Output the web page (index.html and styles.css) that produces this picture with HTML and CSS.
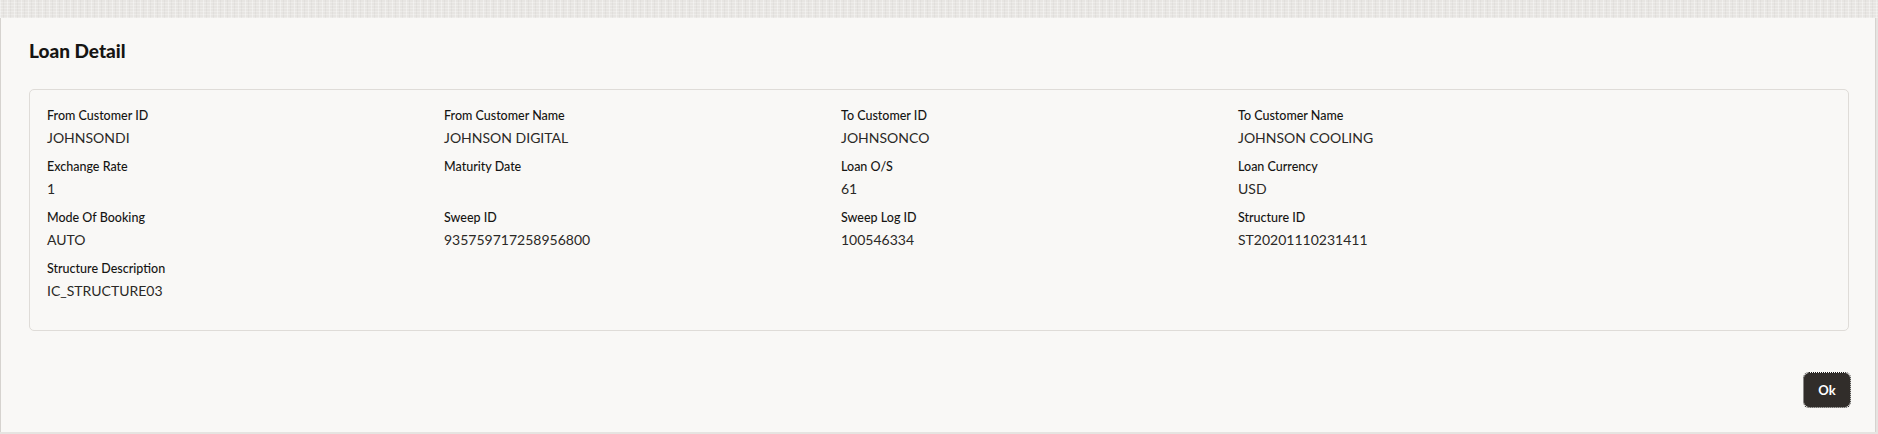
FILE: index.html
```html
<!DOCTYPE html>
<html>
<head>
<meta charset="utf-8">
<link rel="stylesheet" href="styles.css">
</head>
<body>
<div class="backdrop"></div>
<div class="dialog">
  <div class="dialog-header"><h1 class="title">Loan Detail</h1></div>
  <div class="card">
    <div class="grid">
      <div class="field"><div class="label">From Customer ID</div><div class="value">JOHNSONDI</div></div>
      <div class="field"><div class="label">From Customer Name</div><div class="value">JOHNSON DIGITAL</div></div>
      <div class="field"><div class="label">To Customer ID</div><div class="value">JOHNSONCO</div></div>
      <div class="field"><div class="label">To Customer Name</div><div class="value">JOHNSON COOLING</div></div>
      <div class="field"><div class="label">Exchange Rate</div><div class="value">1</div></div>
      <div class="field"><div class="label">Maturity Date</div><div class="value"></div></div>
      <div class="field"><div class="label">Loan O/S</div><div class="value">61</div></div>
      <div class="field"><div class="label">Loan Currency</div><div class="value">USD</div></div>
      <div class="field"><div class="label">Mode Of Booking</div><div class="value">AUTO</div></div>
      <div class="field"><div class="label">Sweep ID</div><div class="value">935759717258956800</div></div>
      <div class="field"><div class="label">Sweep Log ID</div><div class="value">100546334</div></div>
      <div class="field"><div class="label">Structure ID</div><div class="value">ST20201110231411</div></div>
      <div class="field"><div class="label">Structure Description</div><div class="value">IC_STRUCTURE03</div></div>
    </div>
  </div>
  <div class="footer"><button class="btn-ok">Ok</button></div>
</div>
</body>
</html>
```
FILE: styles.css
```css
html, body {
  margin: 0;
  padding: 0;
  background: #e6e4e1;
  font-family: Lato, "Noto Sans", "Liberation Sans", sans-serif;
  color: #161513;
}
.backdrop {
  height: 18px;
  background:
    repeating-linear-gradient(90deg, rgba(255,255,255,0.35) 0 1px, transparent 1px 3px, rgba(0,0,0,0.03) 3px 4px, transparent 4px 7px),
    repeating-linear-gradient(0deg, rgba(255,255,255,0.25) 0 1px, transparent 1px 3px),
    #e7e5e2;
}
.dialog {
  height: 414px;
  box-sizing: border-box;
  background: #f9f8f6;
  border-left: 1px solid #d6d3cf;
  border-right: 1px solid #d6d3cf;
  margin-right: 2px;
  display: flex;
  flex-direction: column;
}
.dialog-header {
  padding: 21px 28px 0;
}
.title {
  margin: 0;
  font-size: 19px;
  line-height: 24px;
  font-weight: 900;
}
.card {
  margin: 26px 26px 0 28px;
  border: 1px solid #dfdcd8;
  border-radius: 5px;
  padding: 17px 17px 29px;
}
.grid {
  display: grid;
  grid-template-columns: repeat(4, 397px);
  row-gap: 10px;
}
.field {
  display: flex;
  flex-direction: column;
  gap: 4px;
}
.label {
  font-size: 12.5px;
  line-height: 17px;
  font-weight: 500;
  color: #161513;
}
.value {
  font-size: 14px;
  line-height: 20px;
  min-height: 20px;
  color: #2b2926;
}
.footer {
  display: flex;
  justify-content: flex-end;
  padding: 42px 25px 0;
}
.btn-ok {
  width: 46px;
  height: 34px;
  background: #312d2a;
  color: #ffffff;
  border: 1px solid #312d2a;
  border-radius: 5px;
  outline: 1px dotted #1a1816;
  outline-offset: 0;
  font-family: Lato, "Noto Sans", sans-serif;
  font-weight: 700;
  font-size: 13px;
  padding: 0;
}
```
